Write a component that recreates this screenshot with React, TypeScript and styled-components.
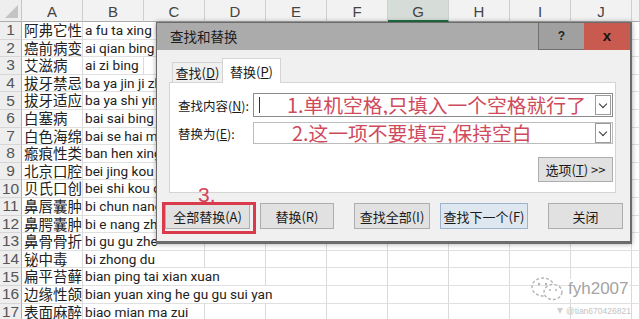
import React from "react";
import styled, { createGlobalStyle } from "styled-components";

// 엑셀 시트 + 查找和替换 대화상자
const rows: [string, string][] = [
  ["阿弗它性口炎", "a fu ta xing kou yan"],
  ["癌前病变", "ai qian bing bian"],
  ["艾滋病", "ai zi bing"],
  ["拔牙禁忌症", "ba ya jin ji zheng"],
  ["拔牙适应症", "ba ya shi ying zheng"],
  ["白塞病", "bai sai bing"],
  ["白色海绵状斑痣", "bai se hai mian zhuang ban zhi"],
  ["瘢痕性类天疱疮", "ban hen xing lei tian pao chuang"],
  ["北京口腔医院", "bei jing kou qiang yi yuan"],
  ["贝氏口创", "bei shi kou chuang"],
  ["鼻唇囊肿", "bi chun nang zhong"],
  ["鼻腭囊肿", "bi e nang zhong"],
  ["鼻骨骨折", "bi gu gu zhe"],
  ["铋中毒", "bi zhong du"],
  ["扁平苔藓样病变", "bian ping tai xian xuan"],
  ["边缘性颌骨骨髓炎", "bian yuan xing he gu gu sui yan"],
  ["表面麻醉", "biao mian ma zui"],
];

const columns = ["A", "B", "C", "D", "E", "F", "G", "H", "I", "J", ""];

const buttons = [
  { label: "全部替换(A)", width: 85, before: 0, active: false },
  { label: "替换(R)", width: 74, before: 10, active: false },
  { label: "查找全部(I)", width: 76, before: 20, active: false },
  { label: "查找下一个(F)", width: 88, before: 10, active: true },
  { label: "关闭", width: 75, before: 20, active: false },
];

const App = () => {
  return (
    <Page>
      <GlobalStyle />
      <Sheet>
        <Corner>
          <CornerMark />
        </Corner>
        {columns.map((c, i) => (
          <ColHeader key={i} selected={c === "G"}>
            {c}
          </ColHeader>
        ))}
        {rows.map(([name, pinyin], r) => (
          <React.Fragment key={r}>
            <RowHeader>{r + 1}</RowHeader>
            <NameCell>{name}</NameCell>
            <PinyinCell>
              <Spill>{pinyin}</Spill>
            </PinyinCell>
            {columns.slice(2).map((c, i) => (
              <Cell key={i} />
            ))}
          </React.Fragment>
        ))}
      </Sheet>

      <Dialog>
        <TitleBar>
          <Title>查找和替换</Title>
          <HelpButton>?</HelpButton>
          <CloseButton>x</CloseButton>
        </TitleBar>
        <Tabs>
          <Tab>
            查找(<u>D</u>)
          </Tab>
          <Tab active>
            替换(<u>P</u>)
          </Tab>
        </Tabs>
        <Panel>
          <FieldRow>
            <Label>
              查找内容(<u>N</u>):
            </Label>
            <Field focused>
              <Caret />
              <Hint indent={33}>1.单机空格,只填入一个空格就行了</Hint>
              <DropButton>
                <Chevron />
              </DropButton>
            </Field>
          </FieldRow>
          <FieldRow>
            <Label>
              替换为(<u>E</u>):
            </Label>
            <Field>
              <Hint indent={38}>2.这一项不要填写,保持空白</Hint>
              <DropButton>
                <Chevron />
              </DropButton>
            </Field>
          </FieldRow>
          <OptionsRow>
            <DialogButton width={75}>
              选项(<u>T</u>) &gt;&gt;
            </DialogButton>
          </OptionsRow>
        </Panel>
        <ButtonRow>
          {buttons.map((b) => (
            <DialogButton key={b.label} width={b.width} before={b.before} active={b.active}>
              {b.label}
            </DialogButton>
          ))}
        </ButtonRow>
        <StepNumber>3.</StepNumber>
        <Highlight />
      </Dialog>

      <Watermark>
        <svg width="34" height="26" viewBox="0 0 34 26">
          <ellipse cx="13" cy="11" rx="11" ry="9" fill="none" stroke="#b4b4b4" strokeWidth="1.4" strokeDasharray="3 2" />
          <ellipse cx="23" cy="16" rx="9" ry="7.5" fill="#fff" stroke="#b4b4b4" strokeWidth="1.4" strokeDasharray="3 2" />
          <circle cx="9" cy="8" r="1.2" fill="#b4b4b4" />
          <circle cx="16" cy="8" r="1.2" fill="#b4b4b4" />
          <circle cx="20" cy="14" r="1" fill="#b4b4b4" />
          <circle cx="26" cy="14" r="1" fill="#b4b4b4" />
        </svg>
        <WatermarkName>fyh2007</WatermarkName>
      </Watermark>
      <WatermarkSmall>
        <svg width="8" height="8" viewBox="0 0 8 8">
          <path d="M1 1 L7 1 L4 7 Z" fill="#cfcfcf" />
        </svg>
        @tian670426821
      </WatermarkSmall>
    </Page>
  );
};

export default App;

const GlobalStyle = createGlobalStyle`
  body {
    margin: 0;
    background: #ffffff;
    font-family: "Liberation Sans", "Noto Sans CJK SC", sans-serif;
  }
`;

const Page = styled.div`
  position: relative;
  width: 640px;
  height: 319px;
  overflow: hidden;
  background: #ffffff;
`;

const Sheet = styled.div`
  display: grid;
  grid-template-columns: 22px repeat(10, 61px) 1fr;
  grid-template-rows: 22px;
  grid-auto-rows: 17.6px;
`;

const Corner = styled.div`
  position: relative;
  background: #eeeeee;
  border-right: 1px solid #c6c6c6;
  border-bottom: 1px solid #acacac;
  box-sizing: border-box;
`;

const CornerMark = styled.div`
  position: absolute;
  right: 3px;
  bottom: 3px;
  width: 0;
  height: 0;
  border-left: 13px solid transparent;
  border-bottom: 13px solid #c4c4c4;
`;

const ColHeader = styled.div<{ selected?: boolean }>`
  box-sizing: border-box;
  background: ${({ selected }) => (selected ? "#d6dcd8" : "#f2f2f2")};
  border-right: 1px solid #cfcfcf;
  border-bottom: ${({ selected }) => (selected ? "2px solid #217346" : "1px solid #acacac")};
  color: #444444;
  font-size: 15px;
  display: flex;
  align-items: center;
  justify-content: center;
  padding-top: 2px;
`;

const RowHeader = styled.div`
  box-sizing: border-box;
  background: #eeeeee;
  border-right: 1px solid #acacac;
  border-bottom: 1px solid #d6d6d6;
  color: #555555;
  font-size: 15.5px;
  display: flex;
  align-items: center;
  justify-content: center;
`;

const Cell = styled.div`
  box-sizing: border-box;
  background: #ffffff;
  border-right: 1px solid #dadada;
  border-bottom: 1px solid #e0e0e0;
`;

const NameCell = styled(Cell)`
  overflow: hidden;
  white-space: nowrap;
  padding-left: 2px;
  font-family: "Noto Sans CJK SC", sans-serif;
  font-size: 14.5px;
  line-height: 16.6px;
  color: #222222;
`;

const PinyinCell = styled(Cell)`
  z-index: 1;
  overflow: visible;
  white-space: nowrap;
  font-family: Roboto, "Liberation Sans", sans-serif;
  font-size: 13.6px;
  line-height: 16.6px;
  color: #222222;
`;

const Spill = styled.span`
  display: inline-block;
  height: 100%;
  padding: 0 3px 0 2px;
  background: #ffffff;
`;

const Dialog = styled.div`
  position: absolute;
  left: 156px;
  top: 22px;
  width: 476px;
  height: 222px;
  box-sizing: border-box;
  border: 1px solid #6c6c6c;
  border-bottom-width: 3px;
  border-right-width: 2px;
  background: #f0f0f0;
  box-shadow: 0 0 5px rgba(0, 0, 0, 0.35);
  display: flex;
  flex-direction: column;
  z-index: 10;
  font-family: "Noto Sans CJK SC", sans-serif;
  color: #1a1a1a;
`;

const TitleBar = styled.div`
  display: flex;
  height: 27px;
  background: #ababab;
  flex-shrink: 0;
`;

const Title = styled.div`
  flex: 1;
  padding-left: 13px;
  font-size: 13.5px;
  line-height: 27px;
  color: #1c1c1c;
`;

const HelpButton = styled.div`
  width: 46px;
  box-sizing: border-box;
  background: #a0a0a0;
  border-left: 1px solid #707070;
  border-bottom: 1px solid #707070;
  display: flex;
  align-items: center;
  justify-content: center;
  font-family: "Liberation Sans", sans-serif;
  font-weight: bold;
  font-size: 12px;
  color: #222222;
`;

const CloseButton = styled.div`
  width: 46px;
  background: #c95a50;
  display: flex;
  align-items: center;
  justify-content: center;
  font-family: "Liberation Sans", sans-serif;
  font-weight: bold;
  font-size: 15px;
  color: #151515;
  padding-bottom: 3px;
  box-sizing: border-box;
`;

const Tabs = styled.div`
  display: flex;
  align-items: flex-end;
  padding: 8px 0 0 15px;
  position: relative;
  z-index: 1;
  margin-bottom: -1px;
`;

const Tab = styled.div<{ active?: boolean }>`
  box-sizing: border-box;
  height: ${({ active }) => (active ? "25px" : "21px")};
  width: ${({ active }) => (active ? "59px" : "51px")};
  background: ${({ active }) => (active ? "#ffffff" : "#f0f0f0")};
  border: 1px solid #d4d4d4;
  border-bottom: ${({ active }) => (active ? "none" : "1px solid #d4d4d4")};
  margin-left: ${({ active }) => (active ? "-1px" : "0")};
  display: flex;
  align-items: center;
  justify-content: center;
  font-size: 13px;
  u {
    text-decoration-thickness: 1px;
  }
`;

const Panel = styled.div`
  margin: 0 14px 0 12px;
  height: 111px;
  box-sizing: border-box;
  background: #ffffff;
  border: 1px solid #d4d4d4;
  padding: 10px 2px 0 8px;
  display: flex;
  flex-direction: column;
  gap: 5px;
`;

const FieldRow = styled.div`
  display: flex;
  align-items: center;
  height: 22px;
  &:first-child {
    height: 24px;
  }
`;

const Label = styled.div`
  width: 75px;
  font-size: 12.5px;
  white-space: nowrap;
`;

const Field = styled.div<{ focused?: boolean }>`
  flex: 1;
  height: 100%;
  box-sizing: border-box;
  border: 1px solid ${({ focused }) => (focused ? "#8a8a8a" : "#bcbcbc")};
  background: #ffffff;
  display: flex;
  align-items: center;
  position: relative;
`;

const Caret = styled.div`
  position: absolute;
  left: 5px;
  top: 3px;
  width: 1px;
  height: 16px;
  background: #333333;
`;

const Hint = styled.div<{ indent: number }>`
  flex: 1;
  padding-left: ${({ indent }) => indent}px;
  font-size: 19.8px;
  line-height: 20px;
  color: #cf4a5c;
  white-space: nowrap;
  overflow: hidden;
`;

const DropButton = styled.div`
  width: 16px;
  height: 20px;
  box-sizing: border-box;
  border: 1px solid #9a9a9a;
  margin-right: 1px;
  display: flex;
  align-items: center;
  justify-content: center;
  background: #ffffff;
`;

const Chevron = styled.div`
  width: 5px;
  height: 5px;
  border-right: 1.5px solid #333333;
  border-bottom: 1.5px solid #333333;
  transform: rotate(45deg);
  margin-top: -3px;
`;

const OptionsRow = styled.div`
  display: flex;
  justify-content: flex-end;
  margin-top: 8px;
  height: 25px;
`;

const DialogButton = styled.div<{ width: number; before?: number; active?: boolean }>`
  width: ${({ width }) => width}px;
  margin-left: ${({ before }) => before || 0}px;
  box-sizing: border-box;
  background: ${({ active }) => (active ? "#dee7ef" : "#e1e1e1")};
  border: 1px solid ${({ active }) => (active ? "#9cb5cc" : "#adadad")};
  display: flex;
  align-items: center;
  justify-content: center;
  font-size: 13px;
  white-space: nowrap;
  color: #1a1a1a;
`;

const ButtonRow = styled.div`
  display: flex;
  height: 26px;
  margin-top: 10px;
  padding-left: 8px;
`;

const StepNumber = styled.div`
  position: absolute;
  left: 41px;
  top: 160px;
  font-family: "Liberation Sans", sans-serif;
  font-size: 21px;
  color: #d24457;
`;

const Highlight = styled.div`
  position: absolute;
  left: 5px;
  top: 179px;
  width: 94px;
  height: 32px;
  box-sizing: border-box;
  border: 3px solid #d93a4c;
`;

const Watermark = styled.div`
  position: absolute;
  left: 530px;
  top: 276px;
  display: flex;
  align-items: center;
  gap: 4px;
  z-index: 2;
`;

const WatermarkName = styled.span`
  font-family: "Liberation Sans", sans-serif;
  font-size: 17px;
  color: #a4a4a4;
  background: #ffffff;
`;

const WatermarkSmall = styled.div`
  position: absolute;
  left: 556px;
  top: 306px;
  display: flex;
  align-items: center;
  gap: 2px;
  font-family: "Liberation Sans", sans-serif;
  font-size: 8.5px;
  color: #c4c4c4;
  z-index: 2;
`;
